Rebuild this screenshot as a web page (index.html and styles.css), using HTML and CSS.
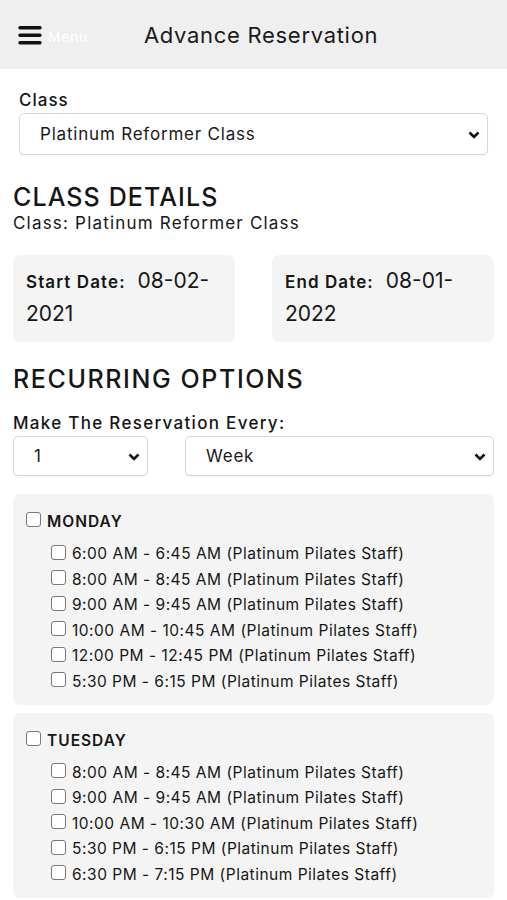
FILE: index.html
```html
<!DOCTYPE html>
<html lang="en">
<head>
  <meta charset="UTF-8">
  <title>Advance Reservation</title>
  <link rel="stylesheet" href="styles.css">
</head>
<body>
  <header class="topbar">
    <button class="menu-btn" type="button">
      <svg width="24" height="20" viewBox="0 0 24 20">
        <path d="M2 2.7h20M2 10.2h20M2 17.7h20" stroke="#111" stroke-width="3.4" stroke-linecap="round"/>
      </svg>
      <span class="menu-text">Menu</span>
    </button>
    <h1 class="page-title">Advance Reservation</h1>
  </header>

  <main class="content">
    <div class="class-field">
      <label class="field-label" for="classSelect">Class</label>
      <div class="select-wrap">
        <select id="classSelect" class="select">
          <option>Platinum Reformer Class</option>
        </select>
        <svg class="chevron" width="12" height="8" viewBox="0 0 12 8"><path d="M1.5 1.5l4.5 4.5 4.5-4.5" fill="none" stroke="#111" stroke-width="2.6"/></svg>
      </div>
    </div>

    <h2 class="section-title">CLASS DETAILS</h2>
    <p class="class-name">Class: Platinum Reformer Class</p>

    <div class="dates">
      <div class="date-box"><span class="date-label">Start Date:</span> 08-02-<wbr>2021</div>
      <div class="date-box"><span class="date-label">End Date:</span> 08-01-<wbr>2022</div>
    </div>

    <h2 class="section-title recurring">RECURRING OPTIONS</h2>
    <div class="field-label every-label">Make The Reservation Every:</div>
    <div class="every-row">
      <div class="select-wrap">
        <select class="select"><option>1</option></select>
        <svg class="chevron" width="12" height="8" viewBox="0 0 12 8"><path d="M1.5 1.5l4.5 4.5 4.5-4.5" fill="none" stroke="#111" stroke-width="2.6"/></svg>
      </div>
      <div class="select-wrap">
        <select class="select"><option>Week</option></select>
        <svg class="chevron" width="12" height="8" viewBox="0 0 12 8"><path d="M1.5 1.5l4.5 4.5 4.5-4.5" fill="none" stroke="#111" stroke-width="2.6"/></svg>
      </div>
    </div>

    <div class="day-box">
      <label class="day-row"><input type="checkbox"> MONDAY</label>
      <label class="slot"><input type="checkbox"> 6:00 AM - 6:45 AM (Platinum Pilates Staff)</label>
      <label class="slot"><input type="checkbox"> 8:00 AM - 8:45 AM (Platinum Pilates Staff)</label>
      <label class="slot"><input type="checkbox"> 9:00 AM - 9:45 AM (Platinum Pilates Staff)</label>
      <label class="slot"><input type="checkbox"> 10:00 AM - 10:45 AM (Platinum Pilates Staff)</label>
      <label class="slot"><input type="checkbox"> 12:00 PM - 12:45 PM (Platinum Pilates Staff)</label>
      <label class="slot"><input type="checkbox"> 5:30 PM - 6:15 PM (Platinum Pilates Staff)</label>
    </div>

    <div class="day-box">
      <label class="day-row"><input type="checkbox"> TUESDAY</label>
      <label class="slot"><input type="checkbox"> 8:00 AM - 8:45 AM (Platinum Pilates Staff)</label>
      <label class="slot"><input type="checkbox"> 9:00 AM - 9:45 AM (Platinum Pilates Staff)</label>
      <label class="slot"><input type="checkbox"> 10:00 AM - 10:30 AM (Platinum Pilates Staff)</label>
      <label class="slot"><input type="checkbox"> 5:30 PM - 6:15 PM (Platinum Pilates Staff)</label>
      <label class="slot"><input type="checkbox"> 6:30 PM - 7:15 PM (Platinum Pilates Staff)</label>
    </div>
  </main>
</body>
</html>
```

FILE: styles.css
```css
body {
  font-family: 'Inter', 'Open Sans', sans-serif;
  background-color: #fff;
  color: #161616;
  margin: 0;
  padding: 0;
}

.topbar {
  display: flex;
  align-items: center;
  height: 69px;
  padding: 0 19px;
  background-color: #efefef;
}

.menu-btn {
  display: flex;
  align-items: center;
  gap: 6px;
  padding: 0;
  border: none;
  background: none;
  margin-left: -1px;
}

.menu-text {
  color: #fff;
  font-family: inherit;
  font-size: 15px;
  margin-top: 4px;
  letter-spacing: 0.6px;
}

.page-title {
  margin: 0 0 0 56px;
  font-size: 22px;
  font-weight: 400;
  line-height: 28px;
  color: #1a1a1a;
  letter-spacing: 0.7px;
}

.content {
  padding: 0 13px 20px;
}

.class-field {
  padding: 0 6px;
  margin-top: 20px;
}

.field-label {
  display: block;
  font-size: 17px;
  line-height: 22px;
  font-weight: 500;
  letter-spacing: 1px;
  margin-bottom: 2px;
}

.every-label {
  letter-spacing: 1.3px;
}

/* selects with a drawn chevron */
.select-wrap {
  position: relative;
}

.select {
  appearance: none;
  -webkit-appearance: none;
  width: 100%;
  height: 42px;
  padding: 0 30px 0 20px;
  font-family: inherit;
  font-size: 17px;
  letter-spacing: 0.8px;
  color: #1a1a1a;
  background: #fff;
  border: 1px solid #d6d6d6;
  border-radius: 5px;
  box-shadow: 0 1px 2px rgba(0,0,0,0.06);
}

.chevron {
  position: absolute;
  right: 8px;
  top: 50%;
  margin-top: -3px;
  pointer-events: none;
}

.section-title {
  margin: 28px 0 0;
  font-size: 25px;
  line-height: 28px;
  font-weight: 500;
  letter-spacing: 1.1px;
}

.class-name {
  margin: 1px 0 0;
  font-size: 17px;
  line-height: 22px;
  letter-spacing: 1.2px;
}

.dates {
  display: grid;
  grid-template-columns: 1fr 1fr;
  gap: 37px;
  margin-top: 21px;
}

.date-box {
  background: #f4f4f4;
  border-radius: 7px;
  padding: 10px 13px 13px;
  font-size: 21px;
  line-height: 31px;
}

.date-label {
  font-size: 17px;
  font-weight: 600;
  letter-spacing: 1.1px;
  margin-right: 6px;
}

.recurring {
  margin-top: 23px;
  margin-bottom: 19px;
  letter-spacing: 1.6px;
}

.every-row {
  display: grid;
  grid-template-columns: 135px 1fr;
  gap: 37px;
  margin-bottom: 18px;
}

.every-row .select {
  height: 40px;
}

.day-box {
  background: #f4f4f4;
  border-radius: 7px;
  padding: 17px 13px 10px;
  margin-bottom: 8px;
}

.day-row {
  display: flex;
  align-items: flex-start;
  font-size: 15.5px;
  line-height: 22px;
  font-weight: 600;
  letter-spacing: 1px;
  margin-bottom: 8px;
}

.slot {
  display: flex;
  align-items: flex-start;
  padding-left: 25px;
  font-size: 15.5px;
  line-height: 25.6px;
  letter-spacing: 0.5px;
}

input[type="checkbox"] {
  appearance: none;
  -webkit-appearance: none;
  flex-shrink: 0;
  width: 15px;
  height: 15px;
  margin: 3.5px 6px 0 0;
  border: 1px solid #777;
  border-radius: 3px;
  background: #fff;
}

.day-row input[type="checkbox"] {
  margin-top: 1px;
}
```
